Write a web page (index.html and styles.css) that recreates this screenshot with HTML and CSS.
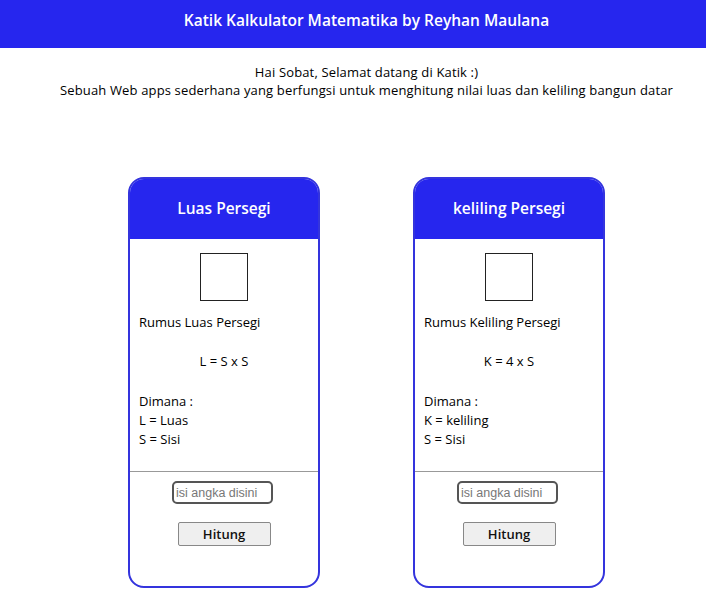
FILE: index.html
```html
<!DOCTYPE html>
<html lang="id">
<head>
<meta charset="utf-8">
<title>Katik</title>
<link rel="stylesheet" href="styles.css">
</head>
<body>
<header class="topbar">
  <h1 class="title">Katik Kalkulator Matematika by Reyhan Maulana</h1>
</header>
<section class="intro">
  <p class="hello">Hai Sobat, Selamat datang di Katik :)</p>
  <p class="desc">Sebuah Web apps sederhana yang berfungsi untuk menghitung nilai luas dan keliling bangun datar</p>
</section>
<main class="cards">
  <div class="card">
    <div class="card-head">Luas Persegi</div>
    <div class="card-body">
      <div class="square"></div>
      <p class="rumus">Rumus Luas Persegi</p>
      <p class="formula">L = S x S</p>
      <p class="legend">Dimana :<br>L = Luas<br>S = Sisi</p>
    </div>
    <div class="card-foot">
      <input class="field" type="text" placeholder="isi angka disini">
      <button class="btn">Hitung</button>
    </div>
  </div>
  <div class="card">
    <div class="card-head">keliling Persegi</div>
    <div class="card-body">
      <div class="square"></div>
      <p class="rumus">Rumus Keliling Persegi</p>
      <p class="formula">K = 4 x S</p>
      <p class="legend">Dimana :<br>K = keliling<br>S = Sisi</p>
    </div>
    <div class="card-foot">
      <input class="field" type="text" placeholder="isi angka disini">
      <button class="btn">Hitung</button>
    </div>
  </div>
</main>
</body>
</html>
```
FILE: styles.css
```css
* { box-sizing: border-box; }
body {
  margin: 0;
  font-family: "Open Sans", "Noto Sans", sans-serif;
  color: #000;
  background: #fff;
}
.topbar {
  background: #2626ee;
  height: 48px;
  padding-top: 10px;
  padding-left: 27px;
}
.title {
  margin: 0;
  text-align: center;
  color: #fff;
  font-size: 15.5px;
  font-weight: 600;
  line-height: 20px;
}
.intro {
  text-align: center;
  padding-top: 15px;
  padding-left: 27px;
  font-size: 13px;
  letter-spacing: 0.15px;
  line-height: 18px;
}
.intro p { margin: 0; }
.cards {
  display: flex;
  gap: 93px;
  padding-left: 128px;
  margin-top: 78px;
}
.card {
  width: 192px;
  height: 411px;
  border: 2px solid #3434dd;
  border-radius: 16px;
  overflow: hidden;
  display: flex;
  flex-direction: column;
}
.card-head {
  background: #2626ee;
  color: #fff;
  height: 60px;
  display: flex;
  align-items: center;
  justify-content: center;
  font-size: 15.5px;
  font-weight: 600;
  padding-bottom: 2px;
}
.card-body {
  padding: 14px 9px 0;
  height: 233px;
  border-bottom: 1px solid #999;
  font-size: 13px;
}
.square {
  width: 48px;
  height: 48px;
  border: 1px solid #222;
  margin: 0 auto;
}
.rumus {
  margin: 12px 0 0;
  line-height: 18px;
}
.formula {
  margin: 21px 0 0;
  text-align: center;
  line-height: 18px;
}
.legend {
  margin: 22px 0 0;
  line-height: 19px;
}
.card-foot {
  display: flex;
  flex-direction: column;
  align-items: center;
  padding-top: 9px;
}
.field {
  width: 101px;
  height: 23px;
  border: 2px solid #555;
  border-radius: 5px;
  padding: 0 2px;
  font-family: "Liberation Sans", Arial, sans-serif;
  font-size: 12.5px;
  margin-left: -3px;
}
.field::placeholder { color: #777; }
.btn {
  margin-top: 18px;
  width: 93px;
  height: 24px;
  background: #efefef;
  border: 1px solid #888;
  border-radius: 2px;
  font-family: "Open Sans", "Noto Sans", sans-serif;
  font-size: 13px;
  font-weight: 600;
  color: #111;
}
```
